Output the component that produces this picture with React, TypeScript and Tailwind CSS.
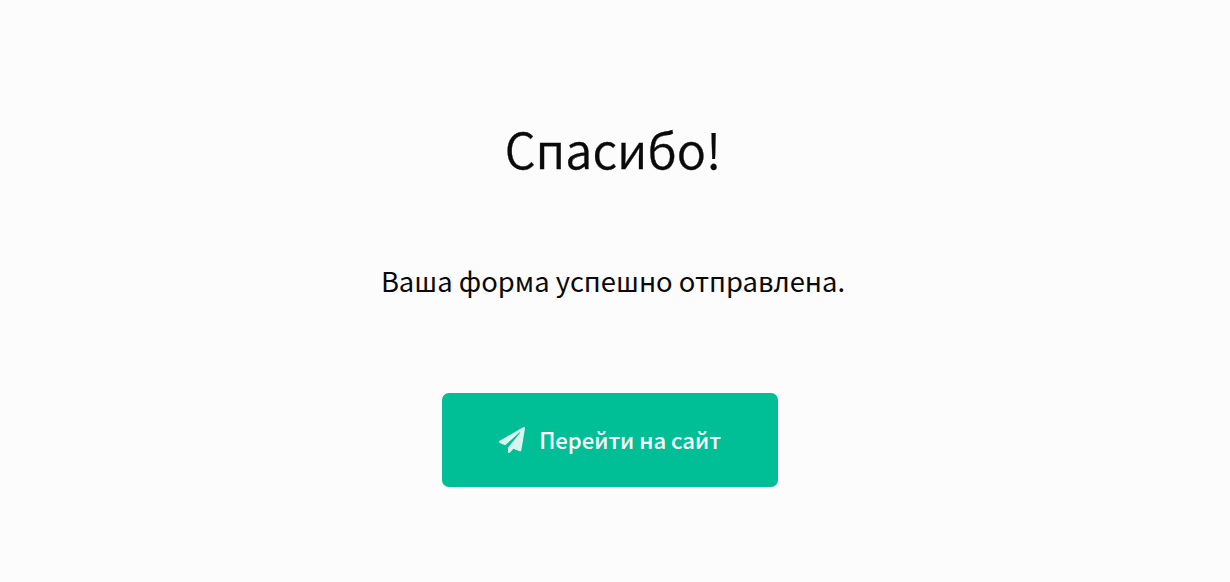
import React from 'react'
import { FaPaperPlane } from 'react-icons/fa'

const App: React.FC = () => {
  return (
    <div className="min-h-screen bg-[#fcfcfc] flex flex-col items-center text-[#0a0a0a] font-['Noto_Sans_CJK_JP','Noto_Sans',sans-serif]">
      {/* Heading */}
      <h1 className="mt-[110px] mr-[4px] text-[48.6px] leading-[76px] font-[350] [-webkit-text-stroke:0.3px_#0a0a0a] whitespace-nowrap">
        Спасибо!
      </h1>

      {/* Message */}
      <p className="mt-[73px] mr-[4px] text-[27.4px] leading-[42px] whitespace-nowrap">
        Ваша форма успешно отправлена.
      </p>

      {/* Back to site */}
      <a
        href="#"
        className="mt-[92px] mr-[10px] w-[336px] h-[94px] rounded-[7px] bg-[#00bf96] text-white flex items-center justify-center gap-[14px]"
      >
        <FaPaperPlane className="w-[26px] h-[26px] opacity-85" />
        <span className="pb-[2px] text-[22.1px] leading-[34px] font-medium whitespace-nowrap">Перейти на сайт</span>
      </a>
    </div>
  )
}

export default App
